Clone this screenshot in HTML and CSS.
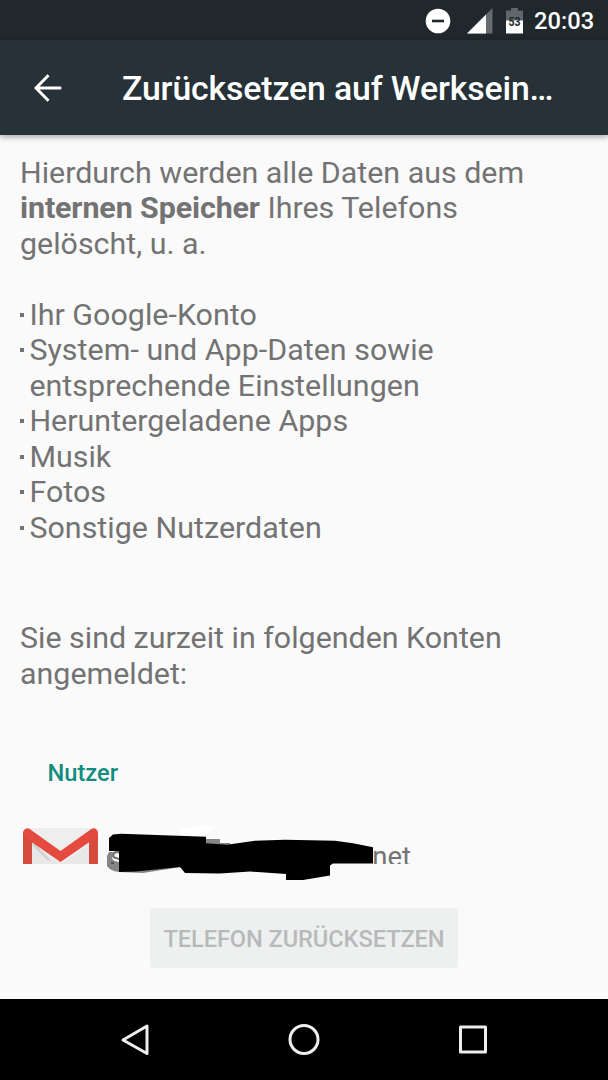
FILE: index.html
```html
<!DOCTYPE html>
<html lang="de">
<head>
<meta charset="utf-8">
<title>Zurücksetzen auf Werkseinstellungen</title>
<link rel="stylesheet" href="styles.css">
</head>
<body>
<div class="screen">
  <div class="status-bar">
    <svg class="dnd" width="26" height="26" viewBox="0 0 26 26"><circle cx="13" cy="13" r="12.3" fill="#fff"/><path d="M7 13h12" stroke="#20282c" stroke-width="2.6"/></svg>
    <svg class="signal" width="26" height="26" viewBox="0 0 26 26"><path d="M0 25.5L25.5 0v25.5z" fill="#646a6d"/><path d="M0 25.5L19 6.5v19z" fill="#fff"/></svg>
    <svg class="battery" width="17" height="26" viewBox="0 0 17 26"><path d="M5 0h7v2.500h5V14H0V2.500h5z" fill="#5f6568"/><path d="M0 12.5h17v13H0z" fill="#fff"/><text class="percent" x="8.500" y="17.500" text-anchor="middle" textLength="12" lengthAdjust="spacingAndGlyphs">53</text></svg>
    <span class="clock">20:03</span>
  </div>
  <header class="app-bar">
    <svg class="back" width="28" height="28" viewBox="0 0 28 28" fill="none" stroke="#fff" stroke-width="3"><path d="M27.3 14H3M14.5 1.3L2 14l12.500 12.700"/></svg>
    <h1 class="title">Zurücksetzen auf Werksein…</h1>
  </header>
  <main class="content">
    <div class="scroll">
      <p class="text">Hierdurch werden alle Daten aus dem<br><b class="strong">internen Speicher</b> Ihres Telefons<br>gelöscht, u. a.</p>
      <ul class="items">
        <li class="item">Ihr Google-Konto</li>
        <li class="item">System- und App-Daten sowie<br>entsprechende Einstellungen</li>
        <li class="item">Heruntergeladene Apps</li>
        <li class="item">Musik</li>
        <li class="item">Fotos</li>
        <li class="item">Sonstige Nutzerdaten</li>
      </ul>
      <p class="text">Sie sind zurzeit in folgenden Konten<br>angemeldet:</p>
      <h2 class="section">Nutzer</h2>
      <div class="account">
        <svg class="mail" width="76" height="36" viewBox="0 0 76 36">
          <path d="M4 0h68v36H4z" fill="#eeeeee"/>
          <path d="M9 13l21 23H26L9 20z" fill="#dadada"/>
          <path d="M9 17l29 19H9zM67 17L38 36h29z" fill="#e8e8e8"/>
          <path d="M9 12l19 21-4-1L9 17z" fill="#d2d2d2"/>
          <path d="M0 5v31h9V11zM75 5v31h-9V11z" fill="#d54b3d"/>
          <path d="M1 2Q4-1 7 1.200L37.500 23 68 1.200Q72-1 74 2q2.500 4-1 7.500L37.500 34 2 9.500Q-1.500 6 1 2z" fill="#e54a3e"/>
        </svg>
        <span class="address"><span>s</span><span class="domain">net</span></span>
        <svg class="redaction" width="310" height="58" viewBox="100 825 310 58">
          <path d="M180 829q18-5 34-3l-5 8h-30z" fill="#fff"/>
          <path d="M107 856l2-4h4q-3 7 2 9l4 1v10q-9-1-12-6zM119 863h68l-6 4-38 6-24-1zM206 839h14v4h10v3h-24z" fill="#858585"/>
          <path d="M111 863h3" stroke="#222"/>
          <path d="M109 838l4-3.500 8-.8 85 3v6.500l21 1.500 28-4 30-1 50 1 18 2.500 20 4v16.300h-40l-3 2v10l-27 4.500h-17v-6l-36-2.500-30 2-35-.5-5-6-44 4.500-17 .5v-21h-10z" fill="#000"/>
        </svg>
      </div>
    </div>
    <button class="reset" disabled>TELEFON ZURÜCKSETZEN</button>
  </main>
  <nav class="nav-bar">
    <svg width="34" height="34" viewBox="0 0 34 34" fill="none" stroke="#eee" stroke-width="3" stroke-linejoin="round"><path d="M29 3v27.500L5 17z"/></svg>
    <svg width="34" height="34" viewBox="0 0 34 34" fill="none" stroke="#eee" stroke-width="3"><circle cx="17" cy="16.500" r="14"/></svg>
    <svg width="34" height="34" viewBox="0 0 34 34" fill="none" stroke="#eee" stroke-width="3" stroke-linejoin="round"><path d="M4.500 4h25v25h-25z"/></svg>
  </nav>
</div>
</body>
</html>
```
FILE: styles.css
```css
* { box-sizing: border-box; }
body { margin: 0; background: #fafafa; font-family: Roboto, "Liberation Sans", sans-serif; }
h1, h2, p, ul { margin: 0; padding: 0; }
svg { display: block; flex: none; }
.screen { width: 608px; height: 1080px; display: flex; flex-direction: column; overflow: hidden; }
.status-bar { height: 40px; background: #20282c; display: flex; align-items: center; padding: 1px 14px 0 425px; flex: none; }
.signal { margin-left: 16px; }
.battery { margin-left: 13px; }
.percent { font-size: 12px; font-weight: 700; fill: #20282c; }
.clock { margin-left: 11px; font-size: 23.7px; font-weight: 500; color: #fff; white-space: nowrap; }
.app-bar { position: relative; height: 95px; flex: none; background: #263238; display: flex; align-items: center; padding: 0 0 0 34px; box-shadow: 0 2px 6px rgba(0,0,0,.35); }
.title { margin-left: 60px; font-size: 33.8px; letter-spacing: -.13px; font-weight: 500; line-height: 40px; color: #fff; white-space: nowrap; padding-top: 3px; }
.content { flex: 1; display: flex; flex-direction: column; align-items: center; background: #fafafa; }
.scroll { width: 100%; height: 729px; padding: 20px 20px 0; flex: none; }
.text { font-size: 30.4px; line-height: 35.47px; color: #737373; white-space: nowrap; }
.strong { letter-spacing: -.1px; }
.items { list-style: none; margin: 35.4px 0 75px; font-size: 30.4px; line-height: 35.47px; color: #737373; letter-spacing: .03px; }
.item { display: flex; white-space: nowrap; }
.item::before { content: ""; width: 4px; height: 4px; margin: 16px 5.4px 0 0; background: #737373; flex: none; }
.section { margin: 68px 0 0 27.5px; font-size: 23.7px; line-height: 28px; font-weight: 500; color: #128c7e; }
.account { position: relative; display: flex; height: 36px; margin: 41px 0 0 3px; }
.address { display: flex; align-items: flex-start; margin-left: 11px; width: 301px; height: 36px; overflow: hidden; font-size: 27.5px; line-height: 32px; padding-top: 13px; color: #737373; justify-content: space-between; }
.redaction { position: absolute; left: 77px; top: -3px; }
.reset { margin-top: 44px; width: 308px; height: 60px; padding: 2px 0 0; border: 0; border-radius: 3px; background: #eef0f0; color: #b7baba; font: 500 23.7px/28px Roboto, sans-serif; letter-spacing: -.12px; white-space: nowrap; }
.nav-bar { height: 81px; flex: none; background: #000; display: flex; justify-content: space-between; align-items: center; padding: 0 118px; }
```
